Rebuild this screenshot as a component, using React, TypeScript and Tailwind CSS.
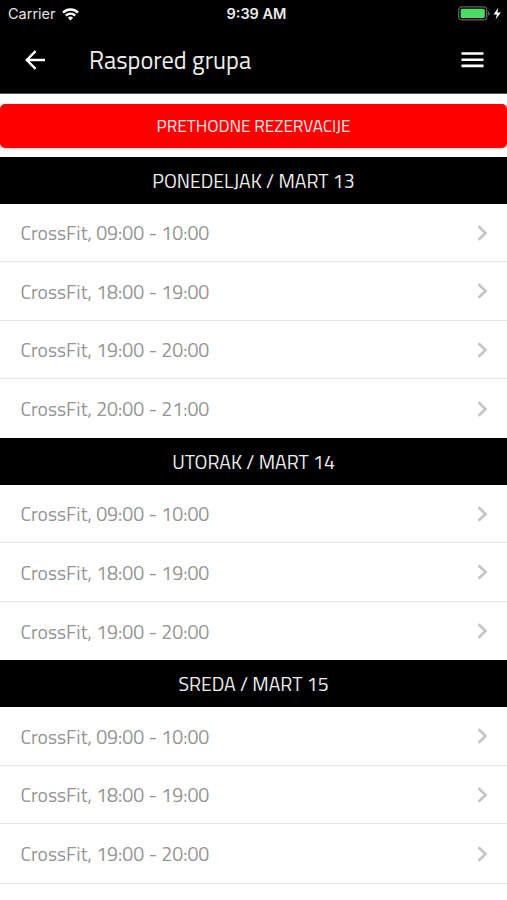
type Day = {
  title: string;
  slots: string[];
};

const days: Day[] = [
  {
    title: 'PONEDELJAK / MART 13',
    slots: ['09:00 - 10:00', '18:00 - 19:00', '19:00 - 20:00', '20:00 - 21:00'],
  },
  {
    title: 'UTORAK / MART 14',
    slots: ['09:00 - 10:00', '18:00 - 19:00', '19:00 - 20:00'],
  },
  {
    title: 'SREDA / MART 15',
    slots: ['09:00 - 10:00', '18:00 - 19:00', '19:00 - 20:00'],
  },
];

function StatusBar() {
  return (
    <div className="grid h-7 grid-cols-3 items-center pl-2 pr-[5px] font-['Inter',sans-serif] text-[14.5px] leading-7 text-white">
      <div className="flex items-center gap-[6px]">
        <span className="text-[#e4e4e4]">Carrier</span>
        <svg width="17" height="13" viewBox="0 0 17 13" fill="none" stroke="currentColor" strokeWidth="2.3" aria-hidden="true">
          <path d="M1 4.6a10.6 10.6 0 0 1 15 0" />
          <path d="M3.8 7.6a6.6 6.6 0 0 1 9.4 0" />
          <path d="M5.9 9.7a3.7 3.7 0 0 1 5.2 0L8.5 12.4Z" fill="currentColor" stroke="none" />
        </svg>
      </div>
      <span className="whitespace-nowrap pl-[3px] text-center font-semibold text-[#ececec]">9:39 AM</span>
      <svg className="justify-self-end" width="44" height="16" viewBox="0 0 44 16" aria-hidden="true">
        <rect x="0.7" y="0.9" width="28" height="13" rx="3.2" fill="none" stroke="#626262" strokeWidth="1.3" />
        <rect x="2.6" y="2.8" width="24.2" height="9.2" rx="1.6" fill="#4cd964" />
        <path d="M30 5.2v4.4c1.1-.3 1.7-1.2 1.7-2.2S31.1 5.5 30 5.2Z" fill="#626262" />
        <path d="M40.4 1.6 35.5 8.4h3.4l-1.3 5 5.2-6.9h-3.5Z" fill="#fff" />
      </svg>
    </div>
  );
}

function AppHeader() {
  return (
    <header className="h-[94px] border-b border-[#555] bg-black text-white">
      <StatusBar />
      <div className="flex h-[63px] items-center pl-[25px] pr-[23px]">
        <button type="button" aria-label="Nazad">
          <svg width="20" height="20" viewBox="0 0 20 20" fill="none" stroke="currentColor" strokeWidth="2.4" aria-hidden="true">
            <path d="M20 10H2M10.6 1.2 1.8 10l8.8 8.8" />
          </svg>
        </button>
        <h1 className="ml-[44px] flex-1 whitespace-nowrap text-[24.4px] leading-8 text-[#ececec]">Raspored grupa</h1>
        <button type="button" aria-label="Meni">
          <svg width="23" height="16" viewBox="0 0 23 16" fill="currentColor" aria-hidden="true">
            <path d="M.5.2h22v2.6H.5zM.5 6.4h22V9H.5zM.5 12.6h22v2.6H.5z" />
          </svg>
        </button>
      </div>
    </header>
  );
}

function SlotRow({ time }: { time: string }) {
  return (
    <li className="flex h-[58.55px] items-center justify-between border-b-[1.5px] border-[#e6e6e6] pl-[20.5px] pr-[19px] last:border-b-0">
      <span className="whitespace-nowrap pt-[2.4px] text-[19.55px] text-[#959595]">CrossFit, {time}</span>
      <svg width="11" height="16" viewBox="0 0 11 16" fill="none" stroke="#c6c6c6" strokeWidth="2.8" aria-hidden="true">
        <path d="M1.5 1.2 8.5 8l-7 6.8" />
      </svg>
    </li>
  );
}

export default function App() {
  return (
    <div className="h-[900px] w-full overflow-hidden bg-white font-['Titillium_Web','Roboto',sans-serif]">
      <AppHeader />
      <button
        type="button"
        className="mt-[9.5px] mb-[9px] block h-[44.5px] w-full rounded-[5px] bg-[#ff0000] pt-[2px] text-[17.1px] text-[#ffe6e6] shadow-[0_1px_3px_rgba(0,0,0,0.2)]"
      >
        PRETHODNE REZERVACIJE
      </button>
      {days.map((day) => (
        <section key={day.title}>
          <h2 className="flex h-[46.8px] items-center justify-center bg-black pt-[2px] text-[19.5px] text-[#ececec]">
            {day.title}
          </h2>
          <ul>
            {day.slots.map((time) => (
              <SlotRow key={time} time={time} />
            ))}
          </ul>
        </section>
      ))}
      <div className="border-t border-[#e6e6e6]" />
    </div>
  );
}
